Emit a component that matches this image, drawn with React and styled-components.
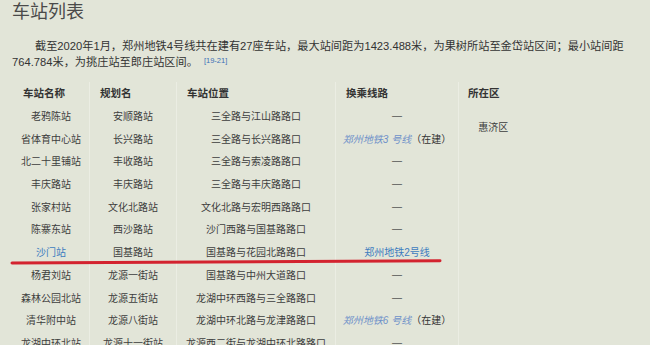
import React from "react";
import styled, { createGlobalStyle } from "styled-components";

const GlobalStyle = createGlobalStyle`
  html, body { margin: 0; padding: 0; background: #e2e5d8; }
  body { font-family: "Liberation Sans", "Noto Sans CJK SC", sans-serif; }
`;

const Page = styled.div`
  position: relative;
  width: 650px;
  height: 345px;
  overflow: hidden;
  padding: 0 12px;
  box-sizing: border-box;
  background: #e2e5d8;
  color: #3a3a3a;
`;

const Title = styled.h2`
  margin: 0;
  font-size: 18px;
  line-height: 24px;
  font-weight: normal;
  color: #4a4a4a;
`;

const Para = styled.p`
  margin: 13.5px -6px 0 0;
  font-size: 11.2px;
  line-height: 16px;
  text-indent: 2.05em;
  color: #333;
`;

const Cite = styled.sup`
  font-size: 7.5px;
  color: #3b6fb6;
  margin-left: 6px;
  vertical-align: 3px;
  line-height: 0;
`;

const Table = styled.table`
  margin-top: 12px;
  border-collapse: collapse;
  table-layout: fixed;
  width: 515px;
  font-size: 10px;
`;

const Th = styled.th`
  height: 22.7px;
  padding: 0 0 0 ${(p) => p.$pl || 10}px;
  text-align: left;
  font-weight: bold;
  font-size: 10.5px;
  color: #333;
  border-left: 1px solid ${(p) => (p.$first ? "transparent" : "#ebede3")};
`;

const Td = styled.td`
  height: 22.7px;
  padding: 0;
  text-align: center;
  white-space: nowrap;
  color: #3d3d3d;
  border-left: 1px solid ${(p) => (p.$first ? "transparent" : "#ebede3")};
  vertical-align: middle;
`;

const Link = styled.span`
  color: #3d7cbf;
`;

const Planned = styled.span`
  color: #6f91c9;
  font-style: italic;
`;

const Note = styled.span`
  color: #333;
`;

const Dash = styled.span`
  color: #555;
`;

const Mark = styled.svg`
  position: absolute;
  left: 0;
  top: 0;
  pointer-events: none;
`;

const rows = [
  ["老鸦陈站", "安顺路站", "三全路与江山路路口", null],
  ["省体育中心站", "长兴路站", "三全路与长兴路路口", { planned: "郑州地铁3 号线" }],
  ["北二十里铺站", "丰收路站", "三全路与索凌路路口", null],
  ["丰庆路站", "丰庆路站", "三全路与丰庆路路口", null],
  ["张家村站", "文化北路站", "文化北路与宏明西路路口", null],
  ["陈寨东站", "西沙路站", "沙门西路与国基路路口", null],
  [{ link: "沙门站" }, "国基路站", "国基路与花园北路路口", { link: "郑州地铁2号线" }],
  ["杨君刘站", "龙源一街站", "国基路与中州大道路口", null],
  ["森林公园北站", "龙源五街站", "龙湖中环西路与三全路路口", null],
  ["清华附中站", "龙源八街站", "龙湖中环北路与龙津路路口", { planned: "郑州地铁6 号线" }],
  ["龙湖中环北站", "龙源十一街站", "龙源西二街与龙湖中环北路路口", null],
];

function Cell({ v }) {
  if (v === null) return <Dash>—</Dash>;
  if (typeof v === "string") return v;
  if (v.link) return <Link>{v.link}</Link>;
  return (
    <>
      <Planned>{v.planned}</Planned>
      <Note>（在建）</Note>
    </>
  );
}

export default function App() {
  return (
    <>
      <GlobalStyle />
      <Page>
        <Title>车站列表</Title>
        <Para>
          截至2020年1月，郑州地铁4号线共在建有27座车站，最大站间距为1423.488米，为果树所站至金岱站区间；最小站间距764.784米，为挑庄站至郎庄站区间。
          <Cite>[19-21]</Cite>
        </Para>
        <Table>
          <colgroup>
            <col style={{ width: 77 }} />
            <col style={{ width: 87 }} />
            <col style={{ width: 159 }} />
            <col style={{ width: 123 }} />
            <col style={{ width: 69 }} />
          </colgroup>
          <thead>
            <tr>
              <Th $first>车站名称</Th>
              <Th>规划名</Th>
              <Th>车站位置</Th>
              <Th>换乘线路</Th>
              <Th $pl={9}>所在区</Th>
            </tr>
          </thead>
          <tbody>
            {rows.map((r, i) => (
              <tr key={i}>
                <Td $first>
                  <Cell v={r[0]} />
                </Td>
                <Td>{r[1]}</Td>
                <Td>{r[2]}</Td>
                <Td>
                  <Cell v={r[3]} />
                </Td>
                {i === 0 ? <Td rowSpan={2}>惠济区</Td> : i === 1 ? null : <Td />}
              </tr>
            ))}
          </tbody>
        </Table>
        <Mark width="650" height="345">
          <line x1="12" y1="263" x2="440" y2="260.8" stroke="#d3232f" strokeWidth="3" strokeLinecap="round" />
        </Mark>
      </Page>
    </>
  );
}
